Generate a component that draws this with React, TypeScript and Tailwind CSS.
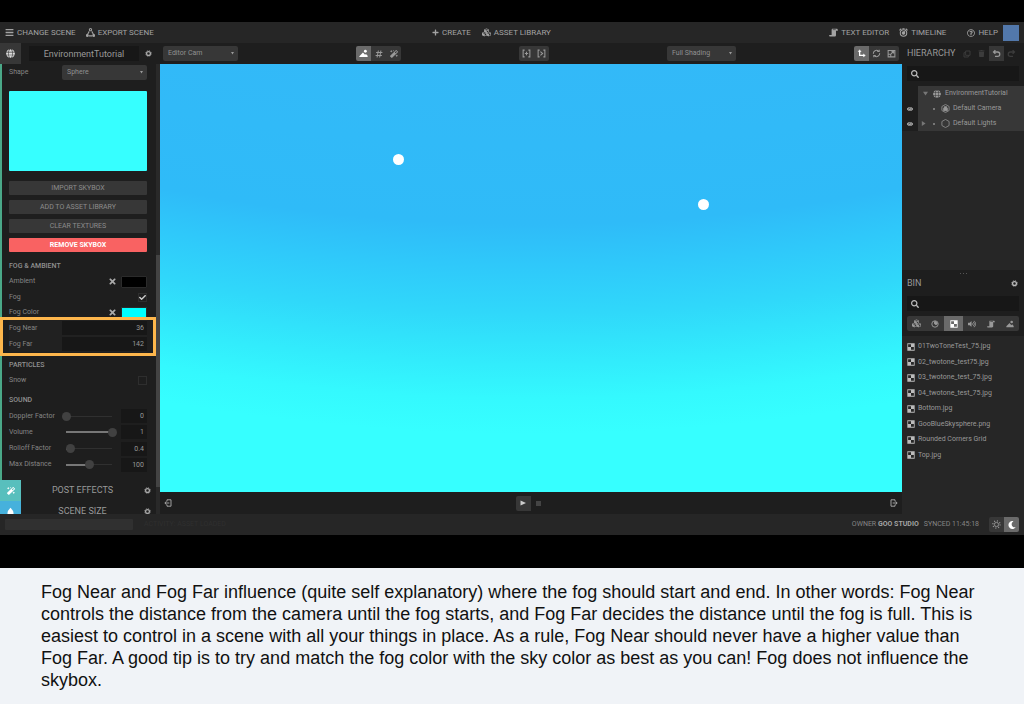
import React from "react";
import { FaBars, FaCubes, FaMagic, FaPlus, FaTrash, FaVolumeUp, FaRegQuestionCircle, FaSearch, FaEye, FaGlobe, FaMoon, FaCheck, FaTimes, FaHashtag } from "react-icons/fa";

type IconProps = { className?: string };

const line = { fill: "none", stroke: "currentColor", strokeWidth: 1.4 } as const;

const Gear = ({ className = "size-[7px]" }: IconProps) => (
  <svg viewBox="0 0 12 12" className={className} {...line}>
    <circle cx="6" cy="6" r="3.3" strokeWidth="2.2" />
    <circle cx="6" cy="6" r="5" strokeWidth="1.2" strokeDasharray="2 1.93" />
  </svg>
);
const Sun = () => (
  <svg viewBox="0 0 12 12" className="size-[9px]" {...line}>
    <circle cx="6" cy="6" r="2.8" strokeWidth="1.2" />
    <circle cx="6" cy="6" r="4.8" strokeWidth="1.8" strokeDasharray="1.3 2.47" />
  </svg>
);
const Exporter = ({ className = "size-[9px]" }: IconProps) => (
  <svg viewBox="0 0 12 12" className={className} {...line}>
    <path d="M4.3 4.5 1.8 9M7.7 4.5l2.5 4.5M3.4 10.5h5.2" />
    <circle cx="6" cy="2.2" r="1.5" />
    <circle cx="1.7" cy="10" r="1.2" fill="currentColor" />
    <circle cx="10.3" cy="10" r="1.2" fill="currentColor" />
  </svg>
);
const Script = ({ className = "size-[9px]" }: IconProps) => (
  <svg viewBox="0 0 12 12" className={className} fill="currentColor">
    <path d="M4.5 1h5.8c1 0 1.5.7 1.5 2.500H9.300V9.500c0 1-.7 1.800-1.800 1.800H1.600C.7 11.300.2 10.600.2 9.200h3.300V3C3.500 1.800 3.800 1 4.500 1Z" />
    <path d="M5 2.200h4" stroke="#262626" strokeWidth=".8" />
  </svg>
);
const Timer = ({ className = "size-[9px]" }: IconProps) => (
  <svg viewBox="0 0 12 12" className={className} {...line}>
    <circle cx="6" cy="6.700" r="4.300" />
    <circle cx="6" cy="6.700" r="1.700" fill="currentColor" />
    <path d="M.6 3.200 3 1M11.400 3.200 9 1M4.500.900h3M6 6.500 8 4.500" />
  </svg>
);
const Scene = ({ className = "size-[9px]" }: IconProps) => (
  <svg viewBox="0 0 12 12" className={className} fill="currentColor">
    <circle cx="8.500" cy="3" r="1.900" />
    <path d="M.5 10.800h11V9L9.300 6.500 8 7.700 5.300 4.500 .5 9.500Z" />
  </svg>
);
const Bracket = ({ play }: { play?: boolean }) => (
  <svg viewBox="0 0 12 12" className="size-[9px]" {...line}>
    <path d="M3.500 1.500h-2v9h2M8.500 1.500h2v9h-2" />
    {play ? <path d="m4.500 3.500 3 2.500-3 2.500" /> : <path d="M6 3.800v4.400M3.800 6h4.400" />}
  </svg>
);
const Axes = () => (
  <svg viewBox="0 0 12 12" className="size-[9px]" fill="none" stroke="currentColor" strokeWidth="1.700">
    <path d="M3.500 2.500v6h6" />
    <path d="M1.500 3.500 3.500.900l2 2.600ZM8.600 6.500l2.600 2-2.600 2Z" fill="currentColor" strokeWidth=".5" />
  </svg>
);
const Rotate = () => (
  <svg viewBox="0 0 12 12" className="size-[9px]" {...line}>
    <path d="M1.800 6.500a4.200 4.200 0 0 1 7-3.600M10.200 5.500a4.200 4.200 0 0 1-7 3.600" />
    <path d="M7 3.400h2.600V1M5 8.600H2.400V11" />
  </svg>
);
const Resize = () => (
  <svg viewBox="0 0 12 12" className="size-[9px]" {...line}>
    <path d="M1.500 2h9v8.500h-9ZM1.500 7h3.500v3.500M5.500 6.500l3-3M6 3.500h2.800v2.600" />
  </svg>
);
const Copy = () => (
  <svg viewBox="0 0 12 12" className="size-[8px]" {...line}>
    <path d="M4 1.500h6.500V8H4ZM4 4H1.500v6.500H8V8" />
  </svg>
);
const Turn = ({ className = "" }: IconProps) => (
  <svg viewBox="0 0 12 12" className={`size-[9px] ${className}`} fill="none" stroke="currentColor" strokeWidth="1.700">
    <path d="M4.500 1.500 2 4l2.500 2.500M2 4h5.500a2.800 2.800 0 0 1 0 5.700H4" />
  </svg>
);
const Texture = ({ className = "size-[9px]" }: IconProps) => (
  <svg viewBox="0 0 12 12" className={className} fill="currentColor">
    <path fillRule="evenodd" d="M.5.5h11v11H.5ZM1.700 1.700V6H6V1.700ZM6 6v4.300h4.300V6Z" />
  </svg>
);
const Sphere = ({ className = "size-[8px]" }: IconProps) => (
  <svg viewBox="0 0 12 12" className={className} {...line}>
    <circle cx="6" cy="6" r="4.800" />
    <path d="M5 2.500h2.500L9.500 5 8 7 5.500 6Z" fill="currentColor" />
  </svg>
);
const Hexagon = ({ camera }: { camera?: boolean }) => (
  <svg viewBox="0 0 12 12" className="size-[9px] shrink-0" fill="none" stroke="currentColor" strokeWidth="1">
    <path d="m6 .6 4.800 2.700v5.400L6 11.400 1.200 8.700V3.300Z" />
    {camera && <path d="M3.500 5.500h5V9h-5ZM4.500 3.500h3v2h-3Z" fill="currentColor" />}
  </svg>
);
const Exit = ({ className = "" }: IconProps) => (
  <svg viewBox="0 0 12 12" className={`size-[8px] ${className}`} {...line}>
    <path d="M7.500 3.500V1.200h-6v9.600h6V8.500M4 6h6.500M8.200 3.500 10.800 6 8.200 8.500" />
  </svg>
);
const Caret = ({ className = "" }: IconProps) => (
  <svg viewBox="0 0 6 6" className={`size-[5px] shrink-0 ${className}`} fill="currentColor">
    <path d="M0 1h6L3 5.500Z" />
  </svg>
);

function MenuButton({ icon, children }: { icon: React.ReactNode; children: string }) {
  return (
    <button className="flex items-center gap-[3px] text-[8px] whitespace-nowrap">
      {icon}
      {children}
    </button>
  );
}

function Tool({ label, active, dim, children }: { label: string; active?: boolean; dim?: boolean; children: React.ReactNode }) {
  const tone = active ? "bg-[#6a6a6a] text-white" : dim ? "text-[#3c3c3c]" : "bg-[#373737] text-[#999]";
  return (
    <button aria-label={label} className={`flex h-[15px] min-w-[15px] flex-1 items-center justify-center ${tone}`}>
      {children}
    </button>
  );
}

const ToolGroup = ({ children, className = "" }: { children: React.ReactNode; className?: string }) => (
  <div className={`flex shrink-0 overflow-hidden rounded-[2px] ${className}`}>{children}</div>
);

function Picker({ label, value, className }: { label: string; value: string; className: string }) {
  return (
    <div className={`relative ${className}`}>
      <select aria-label={label} className="block h-[15px] w-full appearance-none rounded-[2px] bg-[#373737] pl-[5px] text-[7px] text-[#909090]">
        <option>{value}</option>
      </select>
      <svg viewBox="0 0 6 6" className="pointer-events-none absolute top-[6px] right-[4px] size-[3px] text-[#999]" fill="currentColor">
        <path d="M0 0h6L3 5Z" />
      </svg>
    </div>
  );
}

const PanelButton = ({ children, danger }: { children: string; danger?: boolean }) => (
  <button className={`h-[14px] rounded-[1px] text-[7px] ${danger ? "bg-[#f96262] font-bold text-white" : "bg-[#373737] text-[#8c8c8c]"}`}>{children}</button>
);

const Heading = ({ children }: { children: string }) => (
  <h3 className="flex h-[16px] items-center text-[7px] font-medium text-[#909090]">{children}</h3>
);

function ColorRow({ label, swatch }: { label: string; swatch: string }) {
  return (
    <div className="flex h-[15px] items-center">
      <span className="flex-1">{label}</span>
      <button aria-label={`Clear ${label}`} className="mr-[4px] text-[#aaa]">
        <FaTimes className="size-[9px]" />
      </button>
      <button aria-label={label} className={`h-[12px] w-[26px] rounded-[1px] border border-[#2b2b2b] ${swatch}`} />
    </div>
  );
}

function NumberRow({ label, value }: { label: string; value: string }) {
  return (
    <label className="flex h-[16px] items-center bg-[#212121]">
      <span className="w-[53px]">{label}</span>
      <input defaultValue={value} className="h-[14px] min-w-0 flex-1 bg-[#171717] pr-[3px] text-right text-[#999]" />
    </label>
  );
}

function SliderRow({ label, value, percent }: { label: string; value: string; percent: number }) {
  return (
    <div className="flex items-center">
      <label htmlFor={label} className="w-[53px] shrink-0 whitespace-nowrap">{label}</label>
      <input
        id={label}
        type="range"
        min={0}
        max={100}
        defaultValue={percent}
        style={{
          background: `linear-gradient(#777,#777) 4px 50% / ${Math.round(percent * 0.46)}px 2px no-repeat, linear-gradient(#303030,#303030) 4px 50% / 46px 1px no-repeat`,
        }}
        className="h-[10px] w-[55px] shrink-0 appearance-none [&::-webkit-slider-thumb]:size-[9px] [&::-webkit-slider-thumb]:appearance-none [&::-webkit-slider-thumb]:rounded-full [&::-webkit-slider-thumb]:bg-[#414141]"
      />
      <input aria-label={`${label} value`} defaultValue={value} className="ml-[4px] h-[14px] w-[26px] shrink-0 bg-[#171717] pr-[3px] text-right text-[#999]" />
    </div>
  );
}

function SectionRow({ title, icon, tone }: { title: string; icon: React.ReactNode; tone: string }) {
  return (
    <div className="flex h-[21px] shrink-0 items-center">
      <span className={`flex h-full w-[21px] items-center justify-center text-white ${tone}`}>{icon}</span>
      <h2 className="flex-1 text-center text-[9px] text-[#999]">{title}</h2>
      <button aria-label={`${title} settings`} className="mr-[5px] text-[#aaa]">
        <Gear />
      </button>
    </div>
  );
}

function Inspector() {
  return (
    <aside className="flex w-[160px] shrink-0 flex-col overflow-hidden bg-[#1e1e1e]">
      <div className="flex h-[21px] shrink-0 items-center">
        <span className="flex h-full w-[21px] items-center justify-center bg-[#373737] text-[#ddd]">
          <FaGlobe className="size-[9px]" />
        </span>
        <input aria-label="Scene name" defaultValue="EnvironmentTutorial" className="ml-[8px] h-[15px] w-[110px] bg-[#171717] text-center text-[9px] text-[#999]" />
        <button aria-label="Scene settings" className="ml-[6px] text-[#aaa]">
          <Gear />
        </button>
      </div>
      <div className="flex min-h-0 flex-1">
        <div className="flex min-w-0 flex-1 flex-col overflow-hidden text-[7px] text-[#858585]">
          <div className="flex shrink-0 flex-col border-l-2 border-[#4aa888] pr-[9px] pb-[7px] pl-[7px]">
            <div className="mt-px flex h-[15px] items-center">
              <span className="w-[53px]">Shape</span>
              <Picker label="Shape" value="Sphere" className="flex-1" />
            </div>
            <div className="mt-[11px] h-[80px] rounded-[1px] bg-[#36ffff]" />
            <div className="mt-[10px] flex flex-col gap-[5px]">
              <PanelButton>IMPORT SKYBOX</PanelButton>
              <PanelButton>ADD TO ASSET LIBRARY</PanelButton>
              <PanelButton>CLEAR TEXTURES</PanelButton>
              <PanelButton danger>REMOVE SKYBOX</PanelButton>
            </div>
            <div className="mt-[6px]">
              <Heading>FOG &amp; AMBIENT</Heading>
              <ColorRow label="Ambient" swatch="bg-black" />
              <label className="flex h-[16px] items-center justify-between">
                Fog
                <span className="relative flex size-[9px] items-center justify-center">
                  <input type="checkbox" defaultChecked className="absolute inset-0 appearance-none border border-[#2e2e2e]" />
                  <FaCheck className="relative size-[7px] text-[#ccc]" />
                </span>
              </label>
              <ColorRow label="Fog Color" swatch="bg-[#00ffff]" />
            </div>
            <div className="relative">
              <NumberRow label="Fog Near" value="36" />
              <NumberRow label="Fog Far" value="142" />
              <div className="pointer-events-none absolute -top-[3px] -right-[9px] -bottom-[4px] -left-[9px] border-3 border-[#fdb64c]" />
            </div>
            <div className="mt-[5px]">
              <Heading>PARTICLES</Heading>
              <label className="flex h-[15px] items-center justify-between">
                Snow
                <input type="checkbox" className="size-[9px] appearance-none border border-[#2e2e2e]" />
              </label>
            </div>
            <div className="mt-[4px]">
              <Heading>SOUND</Heading>
              <div className="grid h-[65px] grid-cols-1 grid-rows-4">
                <SliderRow label="Doppler Factor" value="0" percent={0} />
                <SliderRow label="Volume" value="1" percent={100} />
                <SliderRow label="Rolloff Factor" value="0.4" percent={8} />
                <SliderRow label="Max Distance" value="100" percent={50} />
              </div>
            </div>
          </div>
          <SectionRow title="POST EFFECTS" icon={<FaMagic className="size-[8px]" />} tone="bg-[#58bfbd]" />
          <SectionRow
            title="SCENE SIZE"
            tone="bg-[#46b1dc]"
            icon={
              <svg viewBox="0 0 12 12" className="size-[9px]" fill="currentColor">
                <path d="M6 1c1 2 4 3 4 7v3H2V8c0-4 3-5 4-7Z" />
              </svg>
            }
          />
        </div>
        <div className="flex w-[4px] flex-col bg-[#292929]">
          <div className="h-[191px]" />
          <div className="h-[232px] bg-[#434343]" />
        </div>
      </div>
    </aside>
  );
}

function Viewport() {
  return (
    <main className="flex min-w-0 flex-1 flex-col bg-[#1e1e1e]">
      <div className="flex h-[21px] shrink-0 items-center justify-between px-[3px]">
        <Picker label="Camera" value="Editor Cam" className="w-[75px]" />
        <ToolGroup>
          <Tool label="Scene view" active><Scene /></Tool>
          <Tool label="Grid"><FaHashtag className="size-[8px]" /></Tool>
          <Tool label="Effects"><FaMagic className="size-[8px]" /></Tool>
        </ToolGroup>
        <ToolGroup>
          <Tool label="Frame selected"><Bracket /></Tool>
          <Tool label="Frame next"><Bracket play /></Tool>
        </ToolGroup>
        <Picker label="Shading" value="Full Shading" className="w-[69px]" />
        <ToolGroup>
          <Tool label="Move" active><Axes /></Tool>
          <Tool label="Rotate"><Rotate /></Tool>
          <Tool label="Scale"><Resize /></Tool>
        </ToolGroup>
      </div>
      <div className="relative min-h-0 flex-1 bg-[radial-gradient(circle_at_50%_-1740px,#33b9f8_1740px,#2fbbf8_1900px,#2fc8fa_1940px,#30d8fa_1990px,#32ecfc_2040px,#34f9fe_2075px,#36ffff_2110px)]">
        <span className="absolute top-[21%] left-[31.400%] size-[11px] rounded-full bg-white" />
        <span className="absolute top-[31.500%] left-[72.500%] size-[11px] rounded-full bg-white" />
      </div>
      <div className="grid h-[22px] shrink-0 grid-cols-3 items-center px-[4px] text-[#aaa]">
        <button aria-label="Collapse left panel" className="justify-self-start"><Exit className="rotate-180" /></button>
        <ToolGroup className="justify-self-center">
          <Tool label="Play">
            <svg viewBox="0 0 6 6" className="size-[6px]" fill="#ccc"><path d="M.5.5 6 3 .5 5.500Z" /></svg>
          </Tool>
          <Tool label="Stop" dim>
            <span className="size-[5px] bg-[#444]" />
          </Tool>
        </ToolGroup>
        <button aria-label="Collapse right panel" className="justify-self-end"><Exit /></button>
      </div>
    </main>
  );
}

const SearchBox = ({ label }: { label: string }) => (
  <label className="mx-[5px] flex h-[15px] items-center bg-[#171717] pl-[4px] text-[#bbb]">
    <FaSearch className="size-[8px] shrink-0" />
    <input aria-label={label} type="search" className="min-w-0 flex-1 bg-transparent pl-[4px] text-[7px] outline-none" />
  </label>
);

const files = ["01TwoToneTest_75.jpg", "02_twotone_test75.jpg", "03_twotone_test_75.jpg", "04_twotone_test_75.jpg", "Bottom.jpg", "GooBlueSkysphere.png", "Rounded Corners Grid", "Top.jpg"];

function Sidebar() {
  return (
    <aside className="flex w-[122px] shrink-0 flex-col bg-[#262626] text-[7px] text-[#999]">
      <section className="flex h-[227px] shrink-0 flex-col">
        <div className="flex h-[21px] items-center justify-between bg-[#1e1e1e] pr-[5px] pl-[5px]">
          <h2 className="text-[9px]">HIERARCHY</h2>
          <ToolGroup className="w-[60px]">
            <Tool label="Duplicate" dim><Copy /></Tool>
            <Tool label="Delete" dim><FaTrash className="size-[7px]" /></Tool>
            <Tool label="Undo"><Turn /></Tool>
            <Tool label="Redo" dim><Turn className="-scale-x-100" /></Tool>
          </ToolGroup>
        </div>
        <div className="bg-[#1e1e1e] pt-[2px] pb-[5px]">
          <SearchBox label="Search hierarchy" />
        </div>
        <div className="flex">
          <div className="w-[16px] bg-[#1e1e1e] pt-[15px] text-[#bbb]">
            <button aria-label="Toggle Default Camera" className="flex h-[15px] w-full items-center justify-center"><FaEye className="size-[6px]" /></button>
            <button aria-label="Toggle Default Lights" className="flex h-[15px] w-full items-center justify-center"><FaEye className="size-[6px]" /></button>
          </div>
          <ul className="flex-1 bg-[#373737]">
            <li className="flex h-[15px] items-center pl-[5px]"><Caret className="text-[#777]" /><FaGlobe className="mr-[4px] ml-[5px] size-[8px] shrink-0" />EnvironmentTutorial</li>
            <li className="flex h-[15px] items-center pl-[15px]"><span className="mr-[6px] size-[2px] bg-[#777]" /><Hexagon camera /><span className="ml-[3px]">Default Camera</span></li>
            <li className="flex h-[15px] items-center pl-[3px]"><Caret className="-rotate-90 text-[#777]" /><span className="mr-[6px] ml-[7px] size-[2px] bg-[#777]" /><Hexagon /><span className="ml-[3px]">Default Lights</span></li>
          </ul>
        </div>
      </section>
      <section>
        <div className="bg-[#1e1e1e] pb-[5px]">
          <div className="flex h-[6px] items-center justify-center gap-[2px]">
            <span className="size-px bg-[#555]" /><span className="size-px bg-[#555]" /><span className="size-px bg-[#555]" />
          </div>
          <div className="flex h-[15px] items-center justify-between pr-[6px] pl-[5px]">
            <h2 className="text-[9px]">BIN</h2>
            <button aria-label="Bin settings" className="text-[#bbb]"><Gear /></button>
          </div>
          <div className="mt-[5px]"><SearchBox label="Search bin" /></div>
          <ToolGroup className="mx-[5px] mt-[5px]">
            <Tool label="Packs"><FaCubes className="size-[9px]" /></Tool>
            <Tool label="Materials"><Sphere /></Tool>
            <Tool label="Textures" active><Texture className="size-[8px]" /></Tool>
            <Tool label="Sounds"><FaVolumeUp className="size-[8px]" /></Tool>
            <Tool label="Scripts"><Script className="size-[8px]" /></Tool>
            <Tool label="Scenes"><Scene className="size-[8px]" /></Tool>
          </ToolGroup>
        </div>
        <ul className="mt-[3px] grid h-[124px] grid-rows-8 pl-[5px]">
          {files.map((file) => (
            <li key={file} className="flex items-center gap-[3px]"><Texture className="size-[8px] text-[#bbb]" />{file}</li>
          ))}
        </ul>
      </section>
    </aside>
  );
}

export default function App() {
  return (
    <div className="flex min-h-screen flex-col bg-black font-['Roboto',sans-serif]">
      <div className="mt-[22px] mb-[33px] flex flex-1 flex-col bg-[#262626] leading-none">
        <header className="flex h-[21px] shrink-0 items-center justify-between px-[5px] text-[#a3a3a3]">
          <nav className="flex gap-[10px]">
            <MenuButton icon={<FaBars className="size-[9px]" />}>CHANGE SCENE</MenuButton>
            <MenuButton icon={<Exporter />}>EXPORT SCENE</MenuButton>
          </nav>
          <nav className="flex gap-[11px]">
            <MenuButton icon={<FaPlus className="size-[7px]" />}>CREATE</MenuButton>
            <MenuButton icon={<FaCubes className="size-[9px]" />}>ASSET LIBRARY</MenuButton>
          </nav>
          <nav className="flex items-center gap-[10px]">
            <MenuButton icon={<Script />}>TEXT EDITOR</MenuButton>
            <MenuButton icon={<Timer />}>TIMELINE</MenuButton>
            <div className="ml-[11px] flex items-center gap-[5px]">
              <MenuButton icon={<FaRegQuestionCircle className="size-[8px]" />}>HELP</MenuButton>
              <button aria-label="Account" className="size-[16px] bg-[#5278ab]" />
            </div>
          </nav>
        </header>
        <div className="flex h-[471px] min-h-0 flex-auto">
          <Inspector />
          <Viewport />
          <Sidebar />
        </div>
        <footer className="flex h-[21px] shrink-0 items-center px-[5px] text-[7px] text-[#858585]">
          <div className="h-[11px] w-[128px] rounded-[1px] bg-[#303030]" />
          <span className="ml-[11px] text-[#2f2f2f]">ACTIVITY: ASSET LOADED</span>
          <span className="ml-auto">OWNER <b className="text-[#a3a3a3]">GOO STUDIO</b></span>
          <span className="mr-[10px] ml-[5px]">SYNCED 11:45:18</span>
          <ToolGroup>
            <Tool label="Light theme"><Sun /></Tool>
            <Tool label="Dark theme" active><FaMoon className="size-[8px]" /></Tool>
          </ToolGroup>
        </footer>
      </div>
      <p className="bg-[#f0f3f7] py-[13px] pr-[40px] pl-[41px] font-['Liberation_Sans',Arial,sans-serif] text-[18px] leading-[22px] text-[#111]">
        Fog Near and Fog Far influence (quite self explanatory) where the fog should start and end. In other words: Fog Near controls the distance from the camera until the fog starts, and Fog Far decides the distance until the fog is full. This is easiest to control in a scene with all your things in place. As a rule, Fog Near should never have a higher value than Fog Far. A good tip is to try and match the fog color with the sky color as best as you can! Fog does not influence the skybox.
      </p>
    </div>
  );
}
